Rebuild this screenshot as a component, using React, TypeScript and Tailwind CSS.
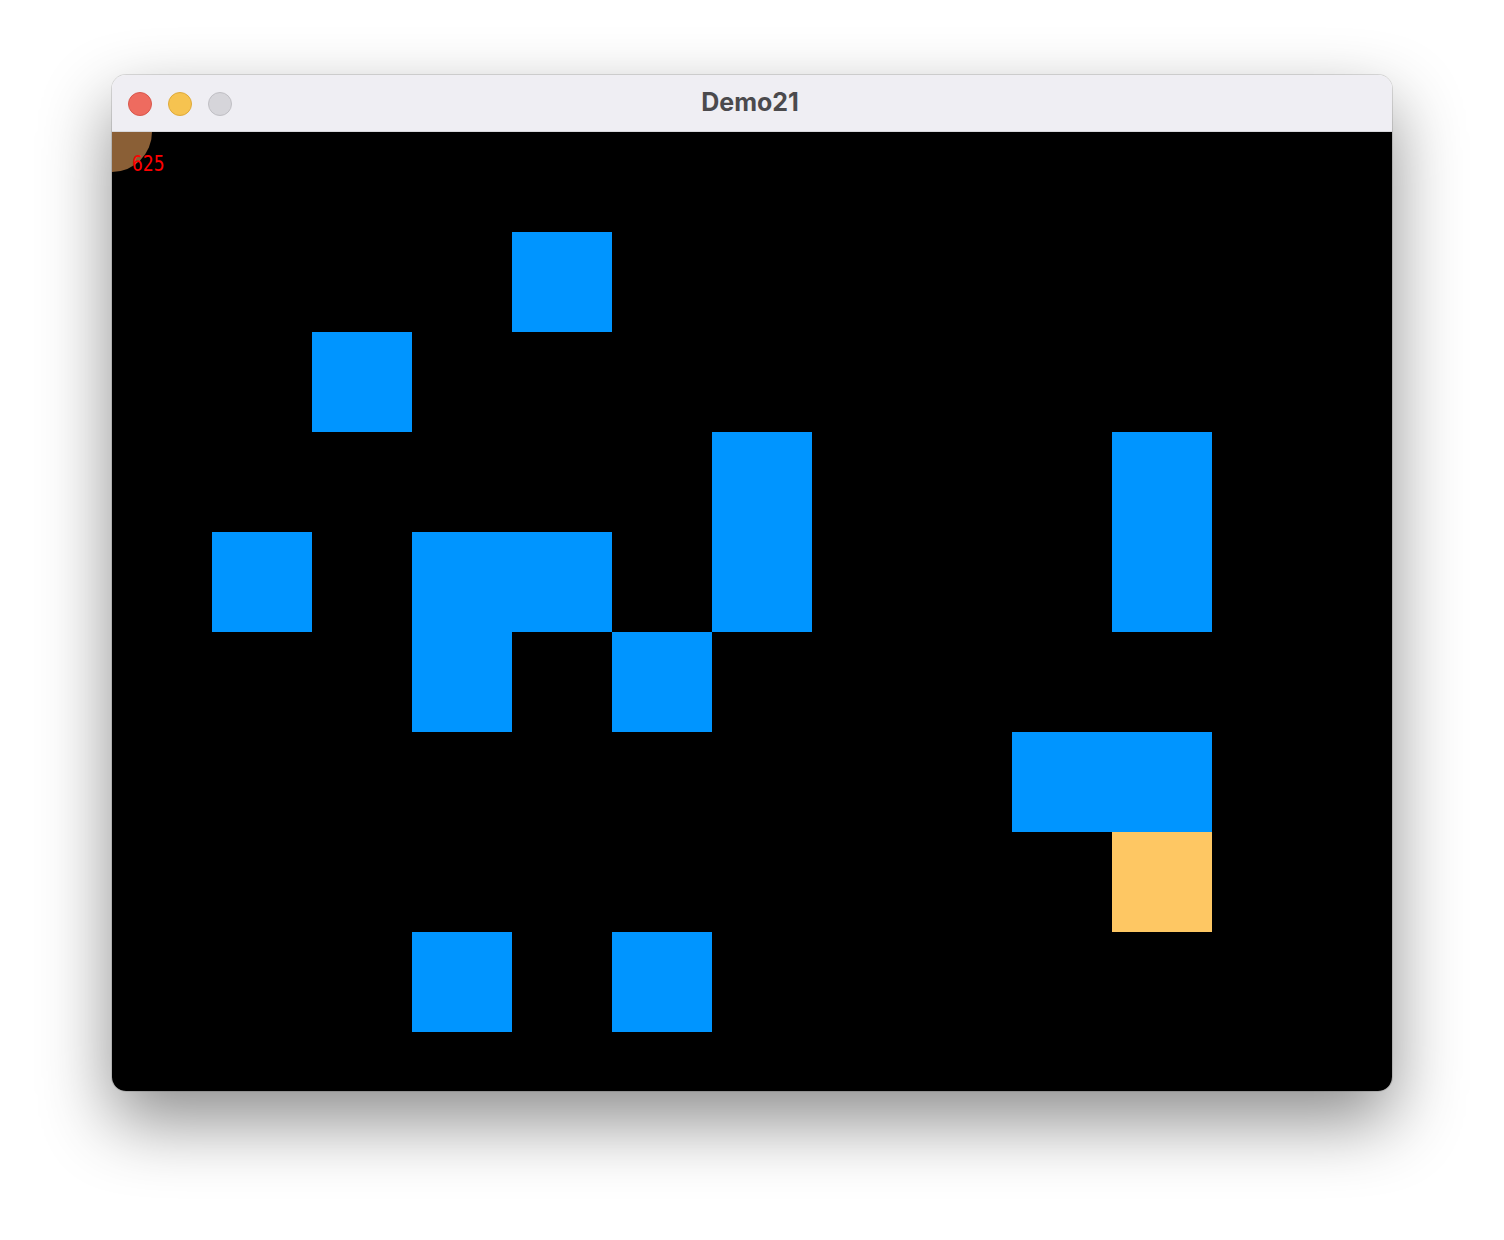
import React from 'react';

type Cell = { col: number; row: number; color: string };

// grid of 100px tiles, 13 x 10 visible area
const cells: Cell[] = [
  { col: 5, row: 2, color: 'bg-[#0095ff]' },
  { col: 3, row: 3, color: 'bg-[#0095ff]' },
  { col: 7, row: 4, color: 'bg-[#0095ff]' },
  { col: 11, row: 4, color: 'bg-[#0095ff]' },
  { col: 2, row: 5, color: 'bg-[#0095ff]' },
  { col: 4, row: 5, color: 'bg-[#0095ff]' },
  { col: 5, row: 5, color: 'bg-[#0095ff]' },
  { col: 7, row: 5, color: 'bg-[#0095ff]' },
  { col: 11, row: 5, color: 'bg-[#0095ff]' },
  { col: 4, row: 6, color: 'bg-[#0095ff]' },
  { col: 6, row: 6, color: 'bg-[#0095ff]' },
  { col: 10, row: 7, color: 'bg-[#0095ff]' },
  { col: 11, row: 7, color: 'bg-[#0095ff]' },
  { col: 11, row: 8, color: 'bg-[#fec763]' },
  { col: 4, row: 9, color: 'bg-[#0095ff]' },
  { col: 6, row: 9, color: 'bg-[#0095ff]' },
];

const colStart: Record<number, string> = {
  1: 'col-start-1', 2: 'col-start-2', 3: 'col-start-3', 4: 'col-start-4', 5: 'col-start-5',
  6: 'col-start-6', 7: 'col-start-7', 8: 'col-start-8', 9: 'col-start-9', 10: 'col-start-10',
  11: 'col-start-11', 12: 'col-start-12', 13: 'col-start-13',
};
const rowStart: Record<number, string> = {
  1: 'row-start-1', 2: 'row-start-2', 3: 'row-start-3', 4: 'row-start-4', 5: 'row-start-5',
  6: 'row-start-6', 7: 'row-start-7', 8: 'row-start-8', 9: 'row-start-9', 10: 'row-start-10',
};

export default function App() {
  return (
    <div className="w-[1504px] h-[1240px] bg-white flex items-start justify-center pt-[75px]">
      <div className="w-[1280px] rounded-[14px] overflow-hidden shadow-[0_30px_70px_rgba(0,0,0,0.45),0_0_0_1px_rgba(0,0,0,0.12)]">
        {/* title bar */}
        <div className="relative h-[57px] bg-[#efeef3] flex items-center justify-center pr-[4px] border-b border-[#d8d8dc]">
          <div className="absolute left-[16px] top-[17px] flex gap-[16px]">
            <span className="w-[24px] h-[24px] rounded-full bg-[#ee6b5f] border border-[#d9574c]" />
            <span className="w-[24px] h-[24px] rounded-full bg-[#f6c350] border border-[#dfaa3a]" />
            <span className="w-[24px] h-[24px] rounded-full bg-[#d6d5da] border border-[#c0bfc4]" />
          </div>
          <span className="font-['Inter',sans-serif] font-bold text-[25px] text-[#4b4a4d]">Demo21</span>
        </div>
        {/* canvas */}
        <div className="relative h-[959px] bg-black overflow-hidden">
          <div className="grid grid-cols-[repeat(13,100px)] grid-rows-[repeat(10,100px)]">
            {cells.map((c, i) => (
              <div key={i} className={`${colStart[c.col]} ${rowStart[c.row]} ${c.color}`} />
            ))}
          </div>
          <div className="absolute -left-[40px] -top-[40px] w-[80px] h-[80px] rounded-full bg-[#8a5f36]" />
          <span className="absolute left-[20px] top-[21px] origin-top-left scale-y-[1.22] font-['DejaVu_Sans_Mono',monospace] text-[18px] leading-[18px] text-[#ff0000]">
            625
          </span>
        </div>
      </div>
    </div>
  );
}
